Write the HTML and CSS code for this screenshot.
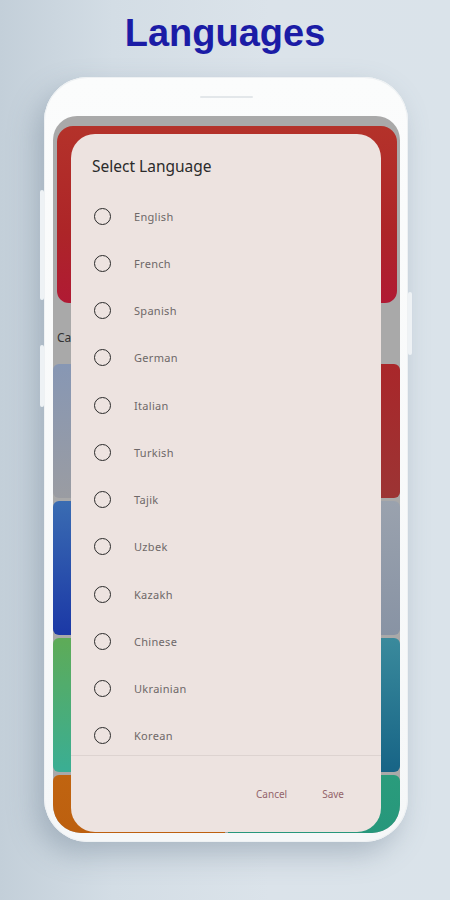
FILE: index.html
```html
<!DOCTYPE html>
<html>
<head>
<meta charset="utf-8">
<link rel="stylesheet" href="styles.css">
</head>
<body>
<h1 class="title">Languages</h1>
<div class="phone">
  <div class="btn-side btn-l1"></div>
  <div class="btn-side btn-l2"></div>
  <div class="btn-side btn-r1"></div>
  <div class="speaker"></div>
  <div class="screen">
    <div class="hero"></div>
    <div class="section-label">Categories</div>
    <div class="grid">
      <div class="card c1"></div>
      <div class="card c2"></div>
      <div class="card c3"></div>
      <div class="card c4"></div>
      <div class="card c5"></div>
      <div class="card c6"></div>
      <div class="card c7"></div>
      <div class="card c8"></div>
    </div>
    <div class="dialog">
      <div class="dialog-title">Select Language</div>
      <ul class="options">
        <li class="option"><span class="radio"></span><span class="opt-label">English</span></li>
        <li class="option"><span class="radio"></span><span class="opt-label">French</span></li>
        <li class="option"><span class="radio"></span><span class="opt-label">Spanish</span></li>
        <li class="option"><span class="radio"></span><span class="opt-label">German</span></li>
        <li class="option"><span class="radio"></span><span class="opt-label">Italian</span></li>
        <li class="option"><span class="radio"></span><span class="opt-label">Turkish</span></li>
        <li class="option"><span class="radio"></span><span class="opt-label">Tajik</span></li>
        <li class="option"><span class="radio"></span><span class="opt-label">Uzbek</span></li>
        <li class="option"><span class="radio"></span><span class="opt-label">Kazakh</span></li>
        <li class="option"><span class="radio"></span><span class="opt-label">Chinese</span></li>
        <li class="option"><span class="radio"></span><span class="opt-label">Ukrainian</span></li>
        <li class="option last"><span class="radio"></span><span class="opt-label">Korean</span></li>
      </ul>
      <div class="actions">
        <span class="action">Cancel</span>
        <span class="action">Save</span>
      </div>
    </div>
  </div>
</div>
</body>
</html>
```

FILE: styles.css
```css
html, body {
  margin: 0;
  padding: 0;
}
body {
  width: 450px;
  height: 900px;
  overflow: hidden;
  background: linear-gradient(90deg, #c3cfd9 0%, #d3dde5 25%, #dbe3ea 60%, #dae3ea 100%);
  font-family: "Noto Sans", "Open Sans", sans-serif;
}
.title {
  margin: 11px 0 0;
  height: 44px;
  line-height: 44px;
  text-align: center;
  font-family: "Liberation Sans", Arial, sans-serif;
  font-size: 38px;
  font-weight: bold;
  color: #1b1ca6;
}
.phone {
  position: relative;
  margin: 22px 0 0 44px;
  width: 364px;
  height: 765px;
  box-sizing: border-box;
  padding: 19px 8px 0 9px;
  border-radius: 44px;
  background: linear-gradient(180deg, #fbfcfc 0%, #f5f7f8 100%);
  box-shadow: -8px 12px 28px rgba(90, 110, 130, 0.35), inset 0 0 0 1px #eef1f3;
}
.btn-side {
  position: absolute;
  width: 4px;
  background: #eef2f5;
  border-radius: 2px;
}
.btn-l1 { left: -4px; top: 113px; height: 110px; }
.btn-l2 { left: -4px; top: 268px; height: 62px; }
.btn-r1 { right: -4px; top: 215px; height: 63px; }
.speaker {
  width: 53px;
  height: 2px;
  margin: 0 auto 18px;
  border-radius: 1px;
  background: #e3e7ea;
}
.screen {
  position: relative;
  height: 717px;
  overflow: hidden;
  border-radius: 24px 24px 28px 28px;
  background: #a9a9a9;
  padding-top: 10px;
  box-sizing: border-box;
}
.hero {
  margin: 0 3px 0 4px;
  height: 177px;
  border-radius: 16px 16px 12px 12px;
  background: linear-gradient(180deg, #b4322a 0%, #ad2528 60%, #b01a34 100%);
}
.section-label {
  padding: 27px 0 18px 4px;
  line-height: 16px;
  font-size: 12px;
  color: #333;
}
.grid {
  display: grid;
  grid-template-columns: 1fr 1fr;
  grid-auto-rows: 134px;
  gap: 3px;
}
.card { border-radius: 6px; }
.c1 { background: linear-gradient(180deg, #8797b4 0%, #9a9ca2 100%); }
.c2 { background: linear-gradient(180deg, #a9272a 0%, #9c3434 100%); }
.c3 { background: linear-gradient(180deg, #3a6cb2 0%, #1b38a6 100%); }
.c4 { background: linear-gradient(180deg, #9aa2ae 0%, #8893a4 100%); }
.c5 { background: linear-gradient(180deg, #5eab57 0%, #3aae94 100%); }
.c6 { background: linear-gradient(180deg, #3a8a9c 0%, #176486 100%); }
.c7 { background: linear-gradient(180deg, #c06410 0%, #b85a0e 100%); }
.c8 { background: linear-gradient(180deg, #2a9c7c 0%, #22907a 100%); }

.dialog {
  position: absolute;
  left: 18px;
  top: 18px;
  width: 310px;
  height: 698px;
  border-radius: 24px;
  background: #ede3e0;
  display: flex;
  flex-direction: column;
}
.dialog-title {
  padding: 22px 0 0 21px;
  line-height: 20px;
  font-size: 15.5px;
  color: #2b2b2b;
}
.options {
  list-style: none;
  margin: 16.6px 0 0;
  padding: 0;
}
.option {
  display: flex;
  align-items: center;
  height: 47.25px;
  padding-left: 23px;
}
.option.last {
  height: 43px;
  align-items: flex-start;
  padding-top: 15px;
  box-sizing: border-box;
}
.radio {
  width: 17px;
  height: 17px;
  box-sizing: border-box;
  border: 1.6px solid #2a2a2a;
  border-radius: 50%;
  flex: none;
}
.opt-label {
  margin-left: 23px;
  font-size: 11px;
  line-height: 17px;
  letter-spacing: 0.3px;
  color: #6e6868;
}
.actions {
  flex: 1;
  border-top: 1px solid #ddd3d0;
  display: flex;
  justify-content: flex-end;
  align-items: flex-start;
  gap: 35px;
  padding: 31px 37px 0 0;
}
.action {
  line-height: 14px;
  font-size: 10px;
  color: #93646b;
}
```
